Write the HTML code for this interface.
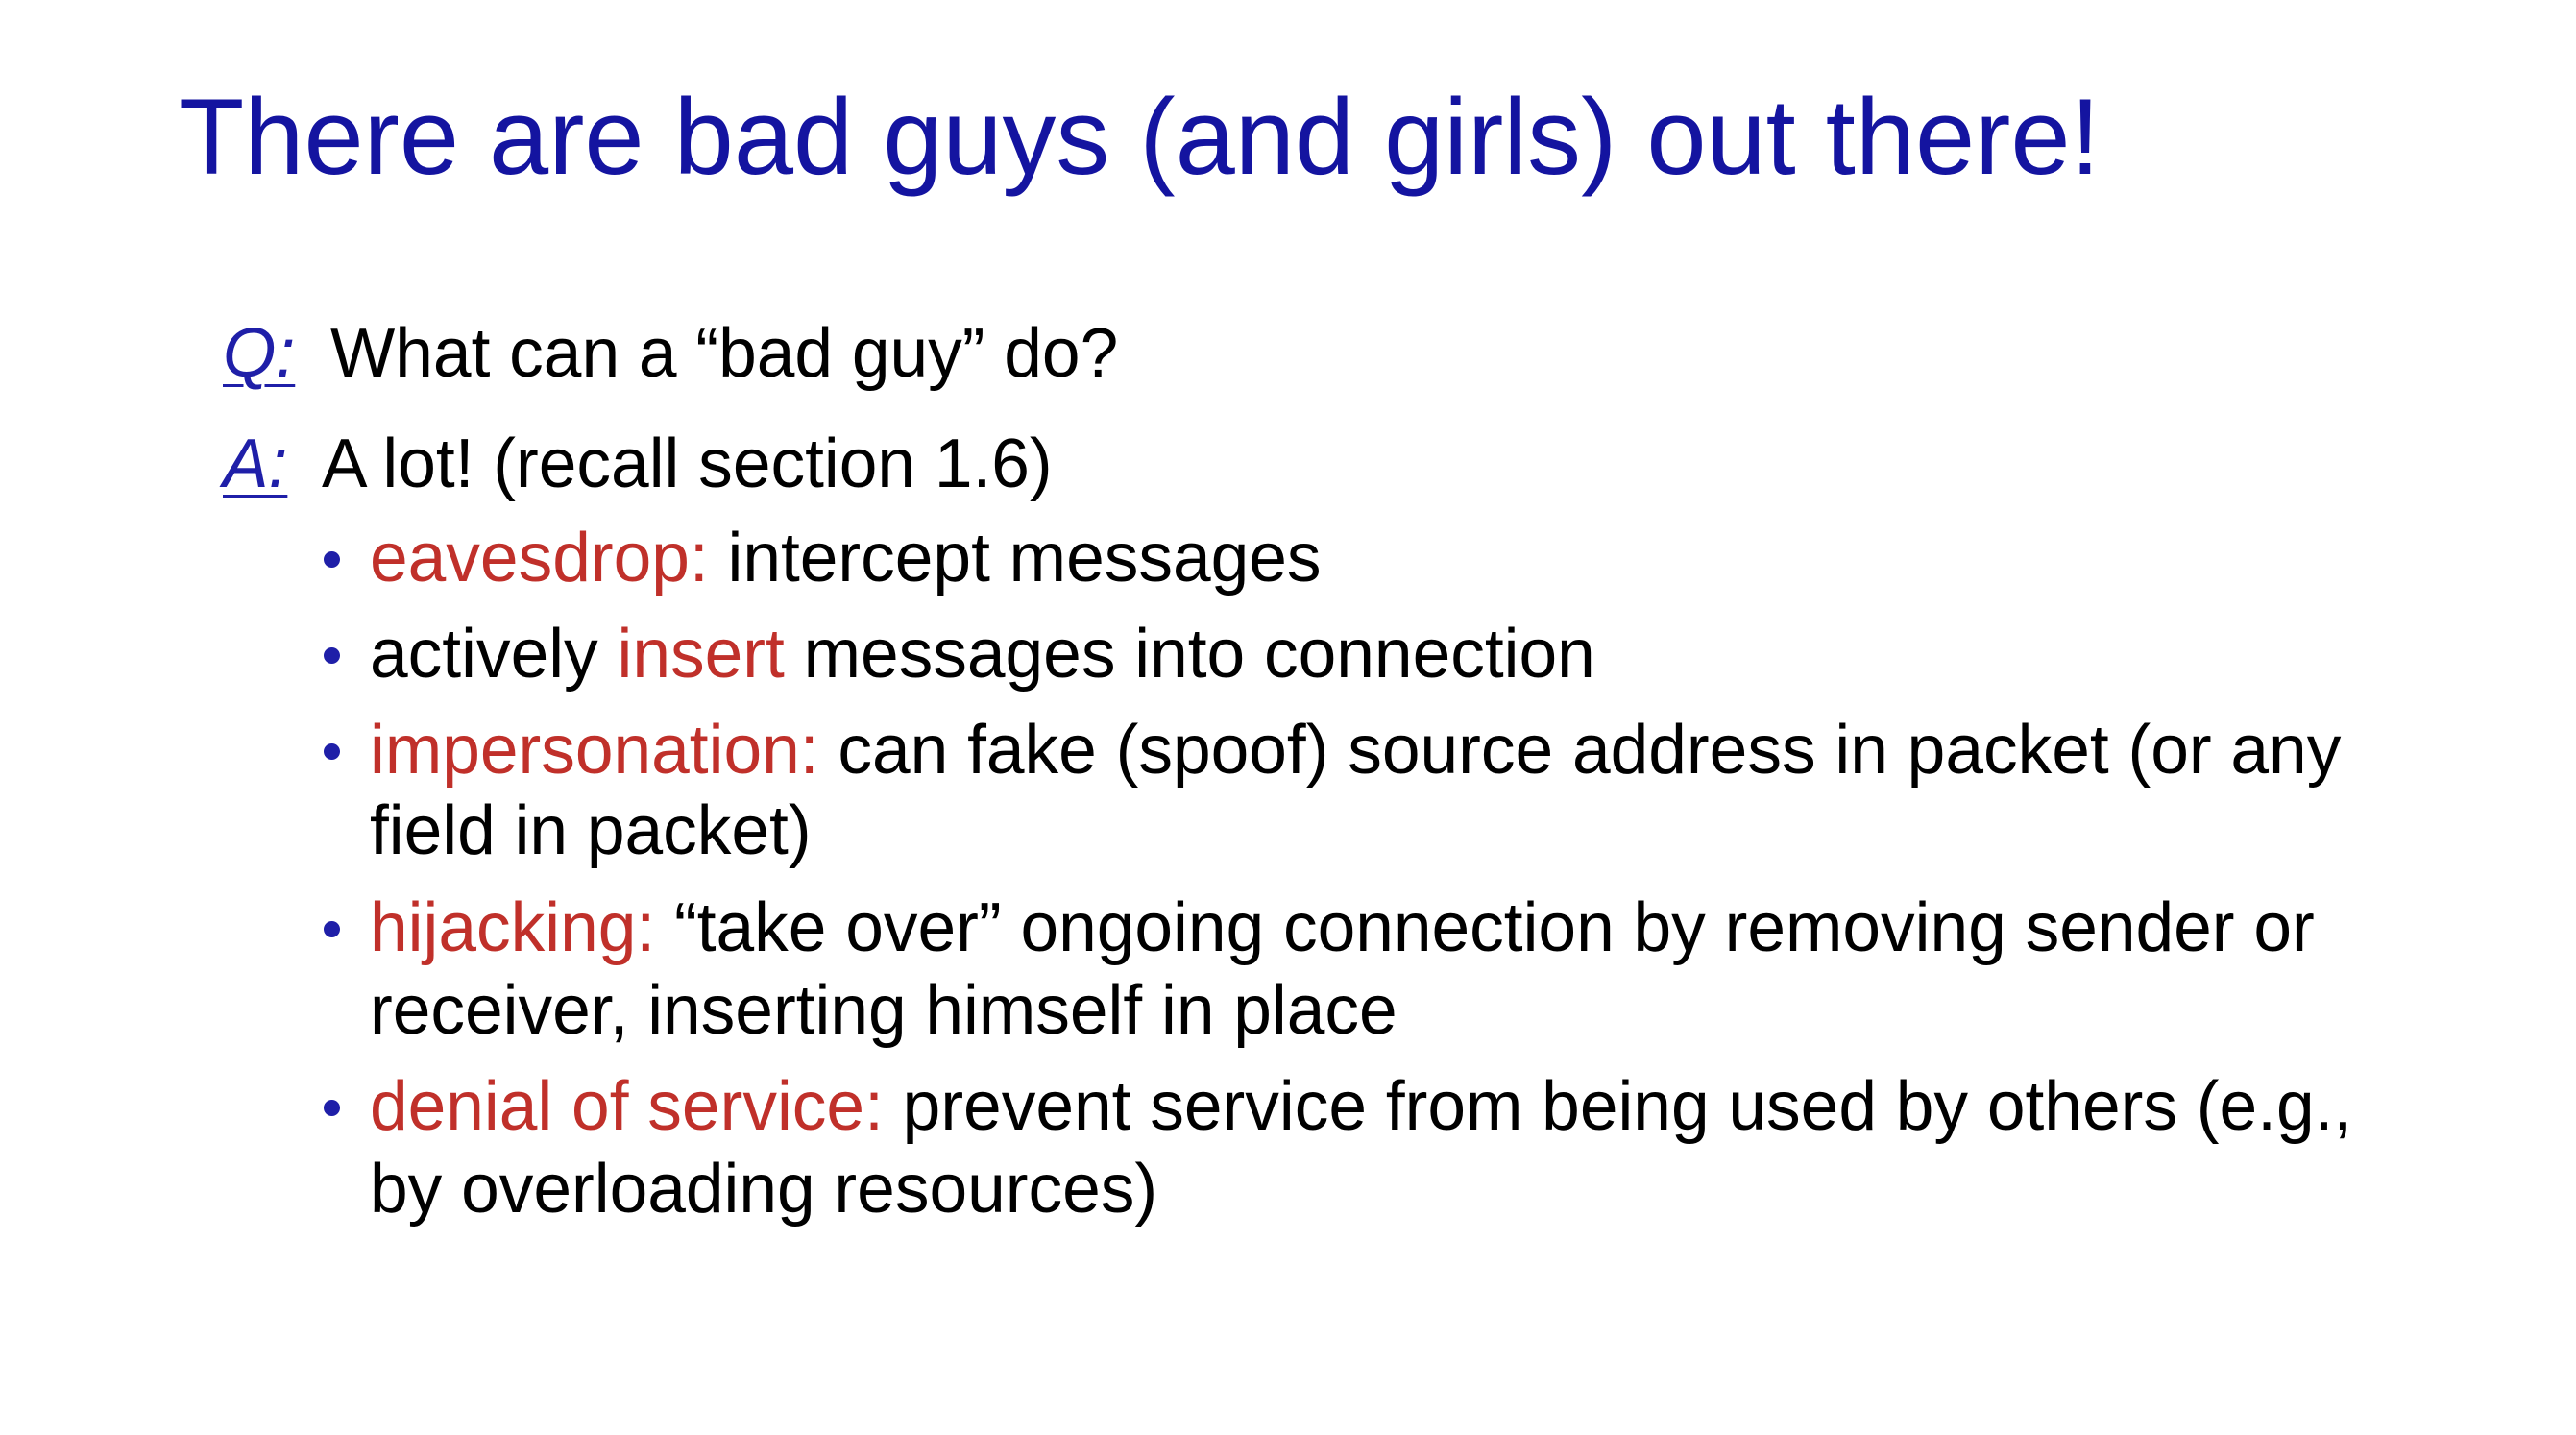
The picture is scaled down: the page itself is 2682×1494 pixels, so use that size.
<!DOCTYPE html>
<html><head><meta charset="utf-8"><style>
html,body{margin:0;padding:0;background:#fff;width:2682px;height:1494px;overflow:hidden}
body{position:relative;font-family:"Liberation Sans",sans-serif}
.l{position:absolute;white-space:nowrap;line-height:1;transform-origin:0 0;}
.t{font-size:112px;color:#1414a0;transform:scaleX(0.998)}
.b{font-size:72px;color:#000;transform:scaleX(0.99)}
.r{color:#c0302a}
.q{color:#1f1fa8;font-style:italic;text-decoration:underline;text-decoration-thickness:3px;text-underline-offset:8px}
.d{position:absolute;width:17px;height:17px;border-radius:50%;background:#1f1fa8}
</style></head><body>
<div class="l t" style="left:186px;top:87px">There are bad guys (and girls) out there!</div>
<div class="l b" style="left:232px;top:332px"><span class="q">Q:</span></div>
<div class="l b" style="left:344px;top:332px">What can a “bad guy” do?</div>
<div class="l b" style="left:232px;top:447px"><span class="q">A:</span></div>
<div class="l b" style="left:335px;top:447px">A lot! (recall section 1.6)</div>

<div class="d" style="left:337px;top:574px"></div>
<div class="l b" style="left:385px;top:545px"><span class="r">eavesdrop:</span> intercept messages</div>
<div class="d" style="left:337px;top:674px"></div>
<div class="l b" style="left:385px;top:645px">actively <span class="r">insert</span> messages into connection</div>
<div class="d" style="left:337px;top:774px"></div>
<div class="l b" style="left:385px;top:745px"><span class="r">impersonation:</span> can fake (spoof) source address in packet (or any</div>
<div class="l b" style="left:385px;top:829px">field in packet)</div>
<div class="d" style="left:337px;top:959px"></div>
<div class="l b" style="left:385px;top:930px"><span class="r">hijacking:</span> “take over” ongoing connection by removing sender or</div>
<div class="l b" style="left:385px;top:1016px">receiver, inserting himself in place</div>
<div class="d" style="left:337px;top:1145px"></div>
<div class="l b" style="left:385px;top:1116px"><span class="r">denial of service:</span> prevent service from being used by others (e.g.,</div>
<div class="l b" style="left:385px;top:1202px">by overloading resources)</div>
</body></html>
